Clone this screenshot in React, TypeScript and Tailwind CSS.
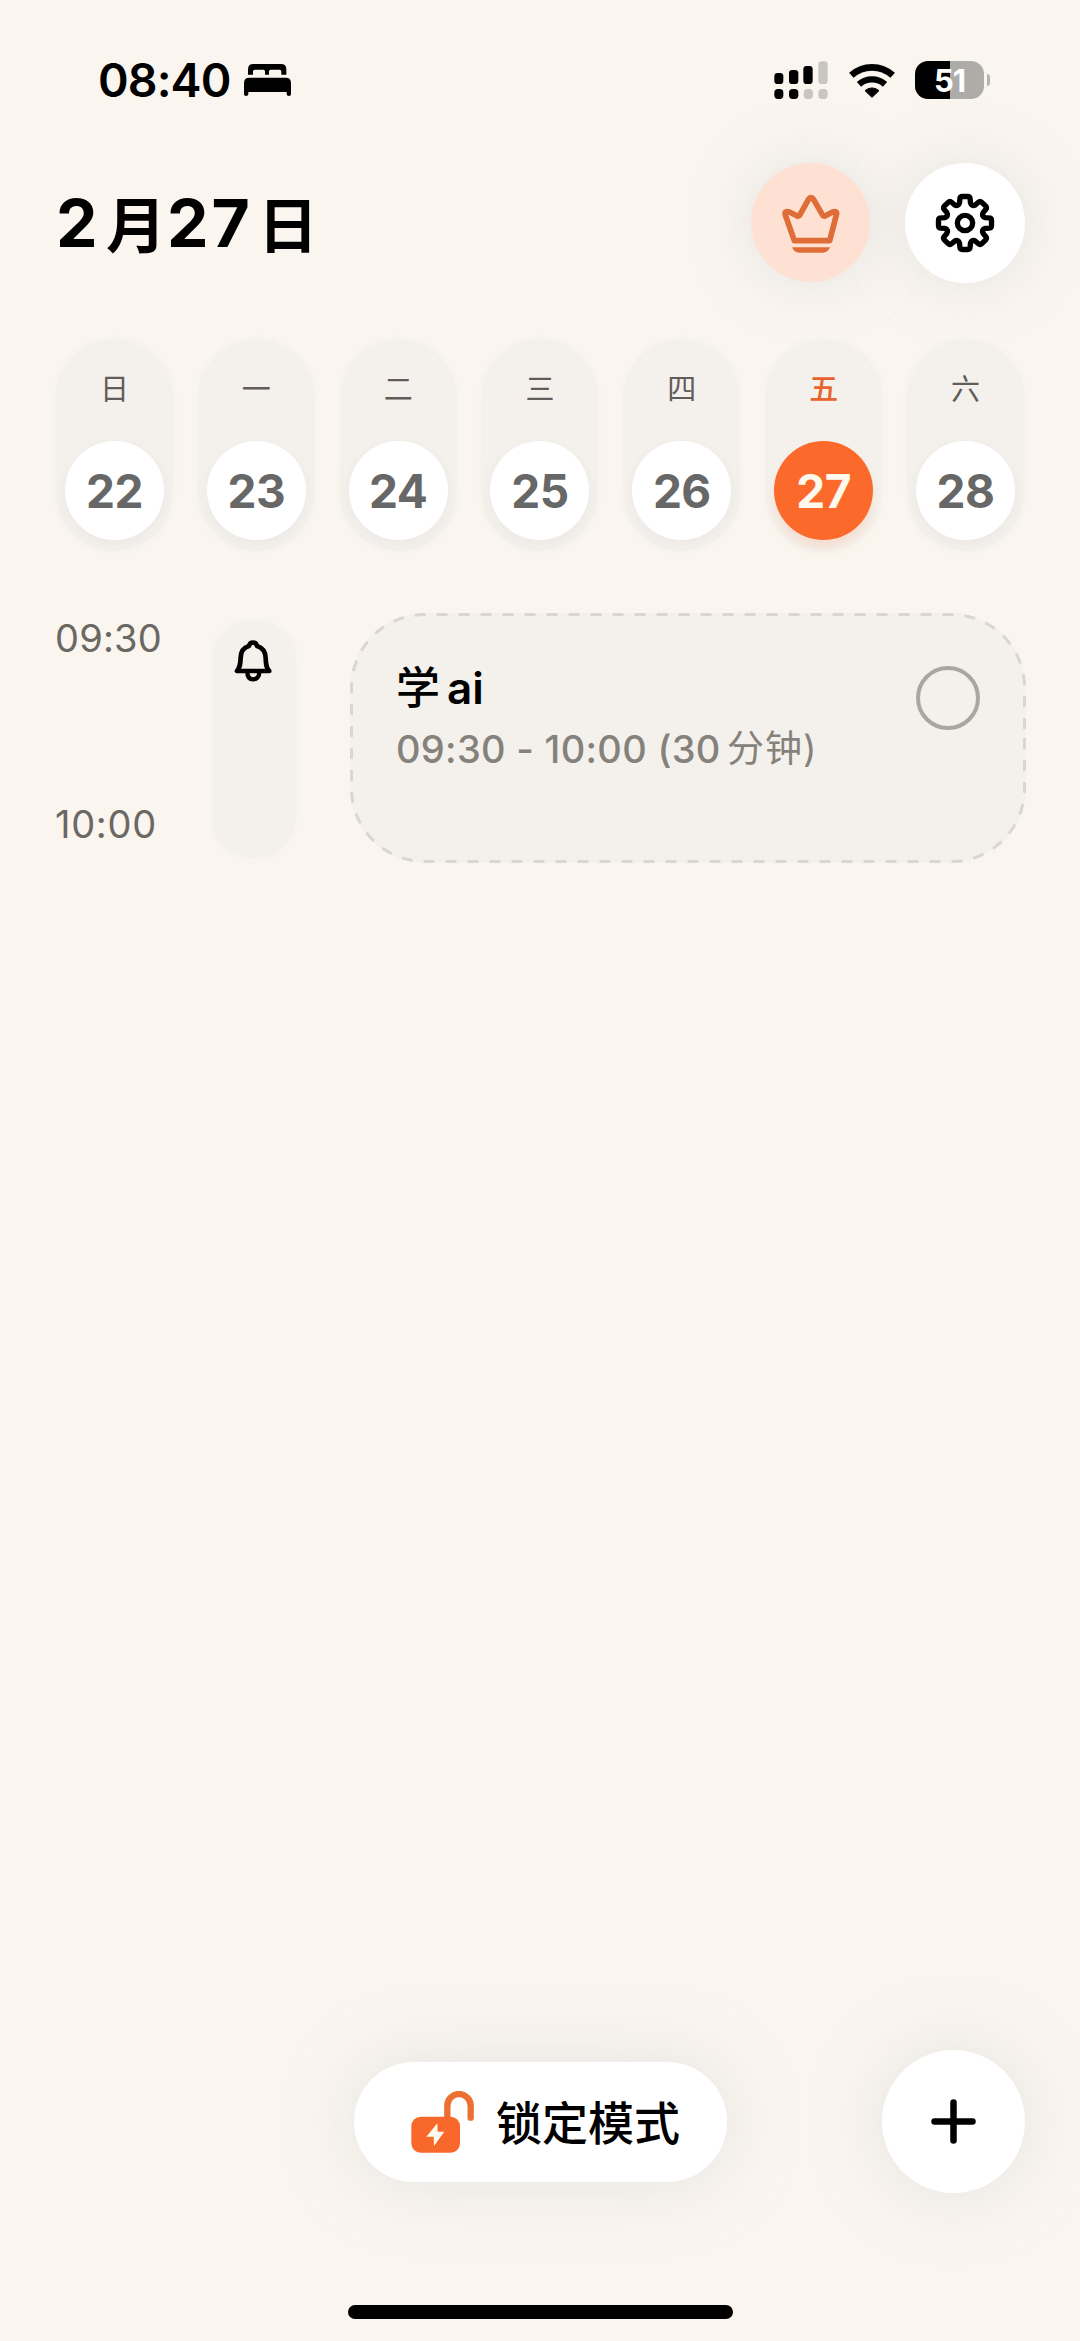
import React from "react";

type Day = {
   label: string;
   date: number;
   active?: boolean;
};

const days: Day[] = [
   { label: "日", date: 22 },
   { label: "一", date: 23 },
   { label: "二", date: 24 },
   { label: "三", date: 25 },
   { label: "四", date: 26 },
   { label: "五", date: 27, active: true },
   { label: "六", date: 28 },
];

const BedIcon = () => (
   <svg className="h-8 w-[47px]" viewBox="552 75 141 96" fill="#000">
      <path d="M564 107V91Q564 75 580 75H663Q679 75 679 91V107H664V97Q664 92 659 92H632Q627 92 627 97V107H615V97Q615 92 610 92H584Q579 92 579 97V107Z" />
      <path d="M552 166V132Q552 116 568 116H677Q693 116 693 132V166Q693 171 687 171Q680 171 680 166V159H565V166Q565 171 558 171Q552 171 552 166Z" />
   </svg>
);

const SignalIcon = () => (
   <svg className="h-[38px] w-[54px]" viewBox="104 63 162 114">
      <g fill="#000">
         <rect x="105" y="99" width="27" height="33" rx="10" />
         <rect x="149" y="90" width="28" height="42" rx="10" />
         <rect x="192" y="78" width="28" height="54" rx="10" />
         <rect x="105" y="147" width="27" height="30" rx="11" />
         <rect x="149" y="147" width="28" height="30" rx="11" />
      </g>
      <g fill="#c9c6c2">
         <rect x="237" y="64" width="28" height="68" rx="10" />
         <rect x="193" y="147" width="28" height="30" rx="11" />
         <rect x="237" y="147" width="28" height="30" rx="11" />
      </g>
   </svg>
);

const WifiIcon = () => (
   <svg className="h-[35px] w-[46px]" viewBox="326 67 138 105" fill="none" stroke="#000">
      <path d="M333 104A92 92 0 0 1 457 104" strokeWidth="20" />
      <path d="M356 131A58 58 0 0 1 434 131" strokeWidth="19" />
      <path d="M395 170L374 150A31 31 0 0 1 416 150Z" fill="#000" strokeWidth="3" strokeLinejoin="round" />
   </svg>
);

const CrownIcon = () => (
   <svg className="h-[60px] w-[60px]" viewBox="182 160 180 180" fill="none" stroke="#df6d37" strokeLinejoin="round" strokeLinecap="round">
      <path
         d="M222 303L195 226Q191 212 207 217L231 229Q236 231 239 225L264 180Q272 168 280 180L306 225Q309 231 314 229L337 217Q352 212 348 226L328 303Z"
         strokeWidth="17"
      />
      <path d="M215 323H329Q322 339 308 339H236Q222 339 215 323Z" fill="#df6d37" stroke="none" />
   </svg>
);

const point = (radius: number, degrees: number) => {
   const rad = (degrees * Math.PI) / 180;
   return `${(radius * Math.sin(rad)).toFixed(2)} ${(-radius * Math.cos(rad)).toFixed(2)}`;
};

// eight rounded teeth with curved valleys in between
const gearPath =
   Array.from({ length: 8 }, (_, i) => {
      const a = i * 45;
      return `${i === 0 ? "M" : "L"}${point(63, a - 15)}L${point(74, a - 12)}Q${point(81, a - 11)} ${point(80, a - 6)}L${point(80, a + 6)}Q${point(81, a + 11)} ${point(74, a + 12)}L${point(63, a + 15)}Q${point(52, a + 22.5)} ${point(63, a + 30)}`;
   }).join("") + "Z";

const GearIcon = () => (
   <svg className="h-[60px] w-[60px]" viewBox="-90 -90 180 180" fill="none" stroke="#000" strokeWidth="16" strokeLinejoin="round">
      <path d={gearPath} />
      <circle r="23" />
   </svg>
);

const BellIcon = () => (
   <svg className="h-[42px] w-[38px]" viewBox="581 151 114 126" fill="none" stroke="#000" strokeWidth="14" strokeLinejoin="round">
      <path d="M590 244H687C676 232 677 222 676 205C675 185 664 173 650 169C647 155 629 155 626 169C612 173 601 185 601 205C600 222 600 232 590 244Z" />
      <path d="M621 247C621 262 628 269 638 269C649 269 657 262 657 247" strokeWidth="13" />
   </svg>
);

const LockIcon = () => (
   <svg className="h-[62px] w-[63px]" viewBox="213 181 189 186">
      <path d="M322 264V225A35 35 0 0 1 392 225V261" fill="none" stroke="#ec7031" strokeWidth="19" strokeLinecap="round" />
      <rect x="214" y="258" width="146" height="108" rx="28" fill="#f8682a" />
      <path d="M292 278L259 318H281L282 346L313 303H293Z" fill="#fffaf0" />
   </svg>
);

const StatusBar = () => (
   <header className="flex h-[160px] items-start justify-between pl-[98px] pr-[90px] pt-[61px]">
      <div className="flex h-[38px] items-center">
         <span className="w-[146px] text-[46.5px] font-semibold leading-[38px] tracking-[-0.9px]">08:40</span>
         <BedIcon />
      </div>
      <div className="flex h-[38px] items-center">
         <SignalIcon />
         <div className="ml-[21px] flex">
            <WifiIcon />
         </div>
         <div className="ml-5 flex h-[38px] w-[69px] items-center justify-center rounded-[13px] bg-linear-to-r from-black from-51% to-[#aeaca9] to-51%">
            <span className="text-[31px] font-bold leading-none tracking-[-1px] text-white">51</span>
         </div>
         <div className="ml-[3px] h-3 w-[3px] rounded-r-full bg-[#b5b2af]" />
      </div>
   </header>
);

const TitleBar = () => (
   <div className="flex h-[126px] items-center justify-between pl-[56px] pr-[55px]">
      <h1 className="flex items-center text-[66px] font-bold leading-[80px]">
         <span className="w-[50px]">2</span>
         <span className="w-[61px] pt-[5px] text-[60px]">月</span>
         <span className="w-[91px] tracking-[3px]">27</span>
         <span className="pt-[5px] text-[60px]">日</span>
      </h1>
      <div className="flex gap-[35px]">
         <button className="flex size-[119px] items-center justify-center rounded-full bg-[#ffe1d3] shadow-[0_0_60px_rgba(200,205,210,0.4)]">
            <CrownIcon />
         </button>
         <button className="flex size-[120px] items-center justify-center rounded-full bg-white shadow-[0_0_60px_rgba(200,205,210,0.4)]">
            <GearIcon />
         </button>
      </div>
   </div>
);

const DayPill: React.FC<{ day: Day }> = ({ day }) => (
   <li className="flex h-[212px] w-[117px] flex-col items-center justify-between rounded-full bg-[#f4f1ed] pb-[11px] pt-[35px] shadow-[0_0_6px_#f4f1ed]">
      <span className={`text-[29px] leading-[32px] ${day.active ? "font-medium text-[#e8632d]" : "text-[#5f5c59]"}`}>{day.label}</span>
      <span
         className={`flex size-[99px] items-center justify-center rounded-full pt-[2px] text-[46px] font-bold tracking-[-0.5px] ${
            day.active ? "bg-[#fc6a2b] text-[#fff8ec] shadow-[0_8px_10px_rgba(252,160,110,0.22)]" : "bg-white text-[#676767] shadow-[0_4px_12px_rgba(200,200,200,0.2)]"
         }`}
      >
         {day.date}
      </span>
   </li>
);

const TaskCard = () => (
   <article className="relative ml-[54px] flex h-[250px] w-[676px] justify-between rounded-[75px] bg-[#f4f0ec] pl-[46px] pr-[46px] pt-[53px]">
      <svg className="absolute inset-0 size-full" viewBox="0 0 676 250" fill="none">
         <path
            d="M674.5 125V175A73 73 0 0 1 601.5 248.5H75A73 73 0 0 1 1.5 175V75A73 73 0 0 1 75 1.5H601.5A73 73 0 0 1 674.5 75V125"
            stroke="#dad6d2"
            strokeWidth="3"
            strokeDasharray="11 11"
         />
      </svg>
      <div>
         <h2 className="flex items-center text-[44px] font-semibold leading-[44px]">
            <span className="w-[51px] font-medium">学</span>
            <span>ai</span>
         </h2>
         <p className="mt-[9px] flex text-[38px] leading-[60px] text-[#85817b]">
            <span className="w-[331px] whitespace-pre font-[450] tracking-[0.3px]">09:30 - 10:00 (30</span>
            <span className="text-[37px] tracking-[1px]">分钟)</span>
         </p>
      </div>
      <span className="size-[64px] rounded-full border-4 border-[#aaa6a2]" />
   </article>
);

export default function App() {
   return (
      <main className="flex h-[2341px] w-[1080px] flex-col overflow-hidden bg-[#faf5ef] font-[Inter,'Noto_Sans_CJK_SC',sans-serif] text-black">
         <StatusBar />
         <TitleBar />
         <ul className="mt-[53px] flex justify-between pl-[56px] pr-[56px]">
            {days.map((day) => (
               <DayPill key={day.date} day={day} />
            ))}
         </ul>
         <section className="mt-[62px] flex pl-[55px]">
            <div className="flex h-[250px] w-[157px] flex-col justify-between pb-[19px] pt-[5px] text-[38px] leading-[40px] text-[#6b6762]">
               <time className="tracking-[0.2px]">09:30</time>
               <time className="tracking-[0.7px]">10:00</time>
            </div>
            <div className="mt-[7px] flex h-[238px] w-[84px] justify-center rounded-[40px] bg-[#f4f1ed] pr-[2px] pt-[20px] shadow-[0_0_6px_#f4f1ed]">
               <BellIcon />
            </div>
            <TaskCard />
         </section>
         <footer className="mt-auto">
            <div className="flex items-center justify-end pr-[55px]">
               <button className="flex h-[120px] w-[373px] items-center rounded-full bg-white pl-[57px] shadow-[0_0_70px_rgba(200,205,210,0.4)]">
                  <LockIcon />
                  <span className="ml-[22px] pt-[2px] text-[46px] font-medium leading-[60px]">锁定模式</span>
               </button>
               <button className="ml-[155px] flex size-[143px] items-center justify-center rounded-full bg-white shadow-[0_0_70px_rgba(200,205,210,0.4)]">
                  <svg className="size-[45px]" viewBox="0 0 45 45" stroke="#000" strokeWidth="6.5" strokeLinecap="round">
                     <path d="M22.5 3.5V41.5M3.5 22.5H41.5" />
                  </svg>
               </button>
            </div>
            <div className="mx-auto mb-[22px] mt-[112px] h-[14px] w-[385px] rounded-full bg-black" />
         </footer>
      </main>
   );
}
